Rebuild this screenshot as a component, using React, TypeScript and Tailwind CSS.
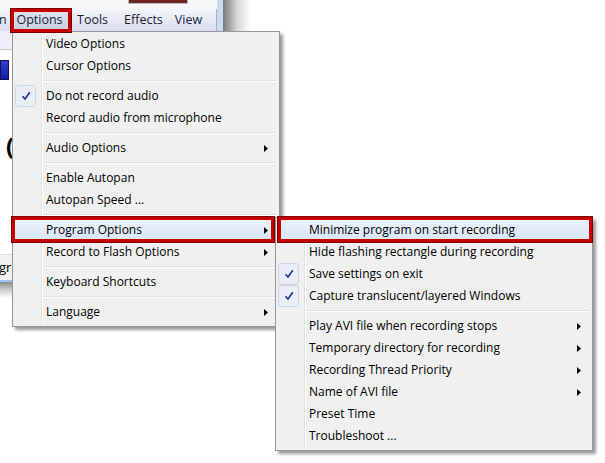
import React from "react";

type Entry =
  | { kind: "item"; label: string; checked?: boolean; sub?: boolean; active?: boolean }
  | { kind: "sep" };

const mainMenu: Entry[] = [
  { kind: "item", label: "Video Options" },
  { kind: "item", label: "Cursor Options" },
  { kind: "sep" },
  { kind: "item", label: "Do not record audio", checked: true },
  { kind: "item", label: "Record audio from microphone" },
  { kind: "sep" },
  { kind: "item", label: "Audio Options", sub: true },
  { kind: "sep" },
  { kind: "item", label: "Enable Autopan" },
  { kind: "item", label: "Autopan Speed ..." },
  { kind: "sep" },
  { kind: "item", label: "Program Options", sub: true, active: true },
  { kind: "item", label: "Record to Flash Options", sub: true },
  { kind: "sep" },
  { kind: "item", label: "Keyboard Shortcuts" },
  { kind: "sep" },
  { kind: "item", label: "Language", sub: true },
];

const programMenu: Entry[] = [
  { kind: "item", label: "Minimize program on start recording", active: true },
  { kind: "item", label: "Hide flashing rectangle during recording" },
  { kind: "item", label: "Save settings on exit", checked: true },
  { kind: "item", label: "Capture translucent/layered Windows", checked: true },
  { kind: "sep" },
  { kind: "item", label: "Play AVI file when recording stops", sub: true },
  { kind: "item", label: "Temporary directory for recording", sub: true },
  { kind: "item", label: "Recording Thread Priority", sub: true },
  { kind: "item", label: "Name of AVI file", sub: true },
  { kind: "item", label: "Preset Time" },
  { kind: "item", label: "Troubleshoot ..." },
];

const Check = () => (
  <div className="absolute left-0 top-0 w-[21px] h-[22px] rounded-[3px] border border-[#cdd6e2] bg-[#e9eef4] flex items-center justify-center">
    <svg width="10" height="10" viewBox="0 0 10 10">
      <path d="M1.5 5.2 L4 8 L8.8 1.2" fill="none" stroke="#1f2f9a" strokeWidth="1.6" />
    </svg>
  </div>
);

const Arrow = () => (
  <svg width="4" height="7" viewBox="0 0 4 7" className="ml-auto">
    <path d="M0 0 L4 3.5 L0 7 Z" fill="#000" />
  </svg>
);

const Menu = ({ entries, className }: { entries: Entry[]; className: string }) => (
  <div
    className={`absolute bg-[#f0f0f0] border border-[#979797] px-[2px] pt-[1px] pb-[3px] shadow-[3px_3px_3px_rgba(0,0,0,0.4)] ${className}`}
  >
    <div className="absolute left-[28px] top-[2px] bottom-[2px] w-px bg-[#e2e3e3]" />
    <div className="absolute left-[29px] top-[2px] bottom-[2px] w-px bg-white" />
    {entries.map((e, i) =>
      e.kind === "sep" ? (
        <div key={i} className="h-[8px] flex flex-col justify-center ml-[27px] mr-[1px]">
          <div className="h-px bg-[#e0e0e0]" />
          <div className="h-px bg-white" />
        </div>
      ) : (
        <div
          key={i}
          className={`relative h-[22px] flex items-center pl-[31px] pr-[9px] ${
            e.active
              ? "bg-gradient-to-b from-[#eaf2fb] to-[#d8e6f4] rounded-[3px]"
              : ""
          }`}
        >
          {e.checked && <Check />}
          <span className="relative">{e.label}</span>
          {e.sub && <Arrow />}
        </div>
      )
    )}
  </div>
);

export default function App() {
  return (
    <div className="relative w-[605px] h-[463px] bg-white overflow-hidden text-[12px] text-black font-['Segoe_UI','Open_Sans',sans-serif]">
      {/* window behind the menus */}
      <div className="flex w-[250px]">
        <div className="w-[217px] flex flex-col">
          <div className="h-[9px] bg-[#f7f7f7] flex">
            <div className="ml-[128px] w-[60px] h-[4px] bg-[#6e2420] border-x border-b border-[#b9b9b9]" />
          </div>
          <div className="h-[22px] bg-gradient-to-b from-[#f3f5fb] to-[#d9deee] border-r border-[#a7aec4] flex items-center text-[12.5px] text-[#1a1a3a]">
            <span className="w-[11px] -ml-[1px]">n</span>
            <span className="w-[59px] h-[22px] flex items-center justify-center bg-gradient-to-b from-[#dfe4ef] to-[#c9d0e2]">
              Options
            </span>
            <span className="ml-[8px]">Tools</span>
            <span className="ml-[16px]">Effects</span>
            <span className="ml-[12px]">View</span>
          </div>
          <div className="h-[19px] bg-[#eef0f7] border-b border-[#c7cce0]" />
          <div className="h-[10px]" />
          <div className="w-[9px] h-[20px] bg-gradient-to-b from-[#3240d0] to-[#0f1ea0] border border-[#101060]" />
          <div className="h-[54px]" />
          <div className="pl-[6px] h-[26px] text-[24px] font-bold leading-[24px]">(</div>
          <div className="h-[94px]" />
          <div className="h-[26px] bg-[#f2f2f2] border-t border-[#dcdcdc] text-[13px] leading-[24px] -ml-[1px]">gr</div>
          <div className="h-[2px] bg-[#9fc3ea]" />
          <div className="h-[16px] bg-gradient-to-b from-[#8a8a8a] via-[#d0d0d0] to-white" />
        </div>
        <div className="w-[6px] h-[31px] bg-[#c9dbef]" />
        <div className="w-[27px] h-[31px] bg-gradient-to-r from-[#7a7a7a] via-[#d4d4d4] to-white" />
      </div>

      <Menu entries={mainMenu} className="left-[12px] top-[31px] w-[268px]" />
      <Menu entries={programMenu} className="left-[275px] top-[217px] w-[318px]" />

      {/* red annotation boxes */}
      <div className="absolute left-[11px] top-[9px] w-[60px] h-[23px] border-[3px] border-[#c80000] shadow-[0_0_0_1px_#7a0000]" />
      <div className="absolute left-[12px] top-[217px] w-[262px] h-[25px] border-[3px] border-[#c80000] shadow-[0_0_0_1px_#7a0000]" />
      <div className="absolute left-[278px] top-[217px] w-[314px] h-[25px] border-[3px] border-[#c80000] shadow-[0_0_0_1px_#7a0000]" />
    </div>
  );
}
